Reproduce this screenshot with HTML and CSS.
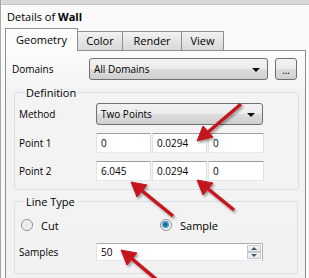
FILE: index.html
```html
<!DOCTYPE html>
<html lang="en">
<head>
    <meta charset="UTF-8">
    <title>Details of Wall</title>
    <link rel="stylesheet" href="styles.css">
</head>
<body>
    <div class="window">
        <div class="topbar"></div>
        <div class="header">Details of <b>Wall</b></div>

        <!-- Tabs -->
        <div class="tabs">
            <div class="tab active">Geometry</div>
            <div class="tab tab-color">Color</div>
            <div class="tab tab-render">Render</div>
            <div class="tab tab-view">View</div>
        </div>

        <div class="pane">
            <div class="row domains">
                <label>Domains</label>
                <div class="combo combo-domains">All Domains<span class="caret"></span></div>
                <div class="dots">...</div>
            </div>

            <!-- Definition group -->
            <fieldset class="group definition">
                <legend>Definition</legend>
                <div class="row">
                    <label>Method</label>
                    <div class="combo combo-method">Two Points<span class="caret"></span></div>
                </div>
                <div class="row">
                    <label>Point 1</label>
                    <div class="field">0</div>
                    <div class="field">0.0294</div>
                    <div class="field">0</div>
                </div>
                <div class="row">
                    <label>Point 2</label>
                    <div class="field">6.045</div>
                    <div class="field">0.0294</div>
                    <div class="field">0</div>
                </div>
            </fieldset>

            <!-- Line Type group -->
            <fieldset class="group linetype">
                <legend>Line Type</legend>
                <div class="row radios">
                    <div class="radio-item cut"><span class="radio"></span>Cut</div>
                    <div class="radio-item"><span class="radio checked"></span>Sample</div>
                </div>
                <div class="row">
                    <label>Samples</label>
                    <div class="spin">50
                        <div class="spin-buttons">
                            <span class="spin-up"></span>
                            <span class="spin-down"></span>
                        </div>
                    </div>
                </div>
            </fieldset>
        </div>

        <!-- Annotation arrows -->
        <svg class="arrows" width="309" height="278" viewBox="0 0 309 278">
            <defs>
                <filter id="shadow" x="-20%" y="-20%" width="140%" height="140%">
                    <feDropShadow dx="1.5" dy="2" stdDeviation="1.2" flood-color="#000" flood-opacity="0.35"/>
                </filter>
            </defs>
            <g filter="url(#shadow)" fill="#c4161c" stroke="#c4161c">
                <line x1="240" y1="104" x2="206" y2="133" stroke-width="3.5"/>
                <polygon points="196,141 202,126 212,137" stroke-width="1"/>

                <line x1="233" y1="210" x2="206" y2="188" stroke-width="3.5"/>
                <polygon points="196,180 212,183 202,195" stroke-width="1"/>

                <line x1="172" y1="216" x2="140" y2="190" stroke-width="3.5"/>
                <polygon points="130,182 146,185 136,197" stroke-width="1"/>

                <line x1="168" y1="290" x2="130" y2="258" stroke-width="3.5"/>
                <polygon points="120,250 136,253 126,265" stroke-width="1"/>
            </g>
        </svg>
    </div>
</body>
</html>
```

FILE: styles.css
```css
/* General Styling */
body {
    margin: 0;
    padding: 0;
    font-family: 'Open Sans', 'Noto Sans', sans-serif;
    font-size: 10px;
    color: #000;
    background: #fafafa;
    overflow: hidden;
}

.window {
    position: relative;
    width: 309px;
    height: 278px;
    overflow: hidden;
    border-left: 1px solid #a8a8a8;
    box-sizing: border-box;
}

.topbar {
    height: 4px;
    background: #d9d9d9;
    border-bottom: 1px solid #c4c4c4;
}

.header {
    height: 23px;
    line-height: 23px;
    padding-left: 6px;
    font-size: 11px;
}

/* Tabs */
.tabs {
    display: flex;
    align-items: flex-end;
    height: 22px;
    margin-left: 4px;
}

.tab {
    box-sizing: border-box;
    height: 19px;
    line-height: 18px;
    text-align: center;
    border: 1px solid #8c8e94;
    border-bottom: none;
    border-left: none;
    background: linear-gradient(#f3f3f3, #e4e4e4 50%, #d9d9d9);
    font-size: 11px;
}

.tab.active {
    width: 73px;
    height: 23px;
    line-height: 22px;
    margin-bottom: -1px;
    border-left: 1px solid #8c8e94;
    background: #fcfcfc;
    position: relative;
    z-index: 1;
}

.tab-color { width: 45px; }
.tab-render { width: 59px; }
.tab-view { width: 42px; }

/* Tab pane */
.pane {
    box-sizing: border-box;
    margin-left: 4px;
    width: 301px;
    height: 240px;
    border: 1px solid #8c8e94;
    background: linear-gradient(#fcfcfc, #f3f3f3 40px, #f2f2f2);
    padding: 7px 7px 0 6px;
}

.row {
    display: flex;
    align-items: center;
    height: 22px;
}

.row label {
    width: 77px;
    flex: none;
}

/* Combo box */
.combo {
    position: relative;
    box-sizing: border-box;
    height: 22px;
    line-height: 20px;
    padding-left: 4px;
    border: 1px solid #707070;
    border-radius: 3px;
    background: linear-gradient(#f2f2f2, #ebebeb 50%, #dddddd 50%, #cfcfcf);
}

.combo-domains { width: 179px; }
.combo-method { width: 167px; }

.caret {
    position: absolute;
    right: 7px;
    top: 9px;
    width: 0;
    height: 0;
    border-left: 4px solid transparent;
    border-right: 4px solid transparent;
    border-top: 4px solid #111;
}

.dots {
    box-sizing: border-box;
    width: 22px;
    height: 22px;
    margin-left: 7px;
    line-height: 22px;
    text-align: center;
    border: 1px solid #707070;
    border-radius: 3px;
    background: linear-gradient(#f2f2f2, #ebebeb 50%, #dddddd 50%, #cfcfcf);
}

/* Group boxes */
.group {
    margin: 5px 0 0 2px;
    padding: 3px 34px 4px 4px;
    border: 1px solid #d5dfe5;
    border-radius: 3px;
}

.group legend {
    margin-left: 4px;
    padding: 0 3px;
    font-size: 11px;
    line-height: 15px;
}

.definition {
    padding-bottom: 8px;
}

.definition .row {
    height: 20px;
    margin-top: 8px;
}

.definition .row:first-of-type {
    height: 22px;
    margin-top: 0;
}

.field {
    box-sizing: border-box;
    width: 55px;
    height: 20px;
    line-height: 18px;
    padding-left: 4px;
    margin-right: 1px;
    background: #fff;
    border: 1px solid #abadb3;
    border-top-color: #9a9da3;
    border-left-color: #e2e3ea;
    border-right-color: #dbdfe6;
    border-bottom-color: #e3e9ef;
}

.field:last-child {
    width: 56px;
    margin-right: 0;
}

.linetype {
    margin-top: 4px;
}

.radios {
    height: 20px;
    margin-top: 3px;
}

.radio-item {
    display: flex;
    align-items: center;
    font-size: 11px;
}

.radio-item.cut {
    width: 139px;
    padding-left: 2px;
}

.radio {
    box-sizing: border-box;
    width: 12px;
    height: 12px;
    margin-right: 8px;
    border-radius: 50%;
    border: 1px solid #8f8f8f;
    background: radial-gradient(circle at 50% 50%, #e6e6e6, #f4f4f4 70%);
}

.radio.checked {
    background: radial-gradient(circle at 45% 45%, #1b4c73 0, #2d87b5 2px, #5bb3d9 3.5px, #f4f4f4 4px);
}

.spin {
    position: relative;
    box-sizing: border-box;
    width: 167px;
    height: 18px;
    line-height: 16px;
    padding-left: 4px;
    background: #fff;
    border: 1px solid #abadb3;
    border-left-color: #e2e3ea;
    border-bottom-color: #e3e9ef;
}

.spin-buttons {
    position: absolute;
    right: 1px;
    top: 1px;
    width: 14px;
    height: 14px;
    display: flex;
    flex-direction: column;
}

.spin-up, .spin-down {
    flex: 1;
    position: relative;
    border: 1px solid #c4c8ce;
    background: linear-gradient(#f6f6f6, #e3e6ea);
}

.spin-up::after, .spin-down::after {
    content: '';
    position: absolute;
    left: 3px;
    top: 1px;
    border-left: 3px solid transparent;
    border-right: 3px solid transparent;
}

.spin-up::after { border-bottom: 3px solid #4a5568; }
.spin-down::after { border-top: 3px solid #4a5568; }

.linetype .row:last-child {
    margin-top: 6px;
    margin-bottom: 6px;
}

/* Arrow overlay */
.arrows {
    position: absolute;
    left: 0;
    top: 0;
    pointer-events: none;
}
```
